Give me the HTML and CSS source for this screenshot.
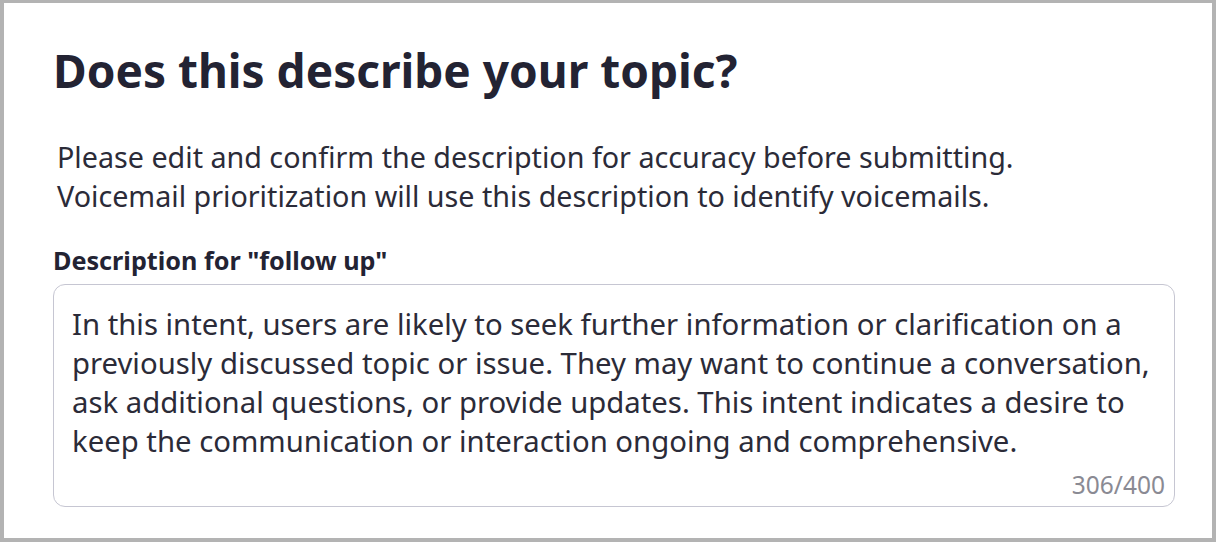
FILE: index.html
```html
<!DOCTYPE html>
<html>
<head>
<meta charset="utf-8">
<link rel="stylesheet" href="styles.css">
</head>
<body>
<div class="frame">
  <div class="dialog">
    <h1 class="title">Does this describe your topic?</h1>
    <p class="intro">Please edit and confirm the description for accuracy before submitting.<br>Voicemail prioritization will use this description to identify voicemails.</p>
    <label class="label">Description for "follow up"</label>
    <div class="field">
      <div class="text">In this intent, users are likely to seek further information or clarification on a previously discussed topic or issue. They may want to continue a conversation, ask additional questions, or provide updates. This intent indicates a desire to keep the communication or interaction ongoing and comprehensive.</div>
      <div class="count">306/400</div>
    </div>
  </div>
</div>
</body>
</html>
```

FILE: styles.css
```css
html, body {
  margin: 0;
  padding: 0;
  background: #ffffff;
}
.frame {
  width: 1216px;
  height: 542px;
  box-sizing: border-box;
  border: 4px solid #b3b3b3;
  border-top-width: 3px;
  background: #fff;
  font-family: "Noto Sans", "Open Sans", sans-serif;
}
.dialog {
  padding: 39px 37px 0 49px;
  display: flex;
  flex-direction: column;
}
.title {
  margin: 0;
  font-size: 46px;
  font-weight: 700;
  color: #232333;
  line-height: 56px;
}
.intro {
  margin: 39px 0 0 4px;
  font-size: 28.7px;
  line-height: 39px;
  color: #2b2b38;
}
.label {
  margin-top: 30px;
  font-size: 25.2px;
  font-weight: 700;
  color: #232333;
  line-height: 30px;
}
.field {
  margin-top: 9px;
  border: 1px solid #c6c6d2;
  border-radius: 12px;
  padding: 20px 14px 6px 18px;
  display: flex;
  flex-direction: column;
}
.text {
  font-size: 29.3px;
  line-height: 39px;
  color: #2b2b38;
}
.count {
  align-self: flex-end;
  margin-top: 9px;
  font-size: 24.5px;
  line-height: 30px;
  color: #8a8a93;
  margin-right: -5px;
}
```
